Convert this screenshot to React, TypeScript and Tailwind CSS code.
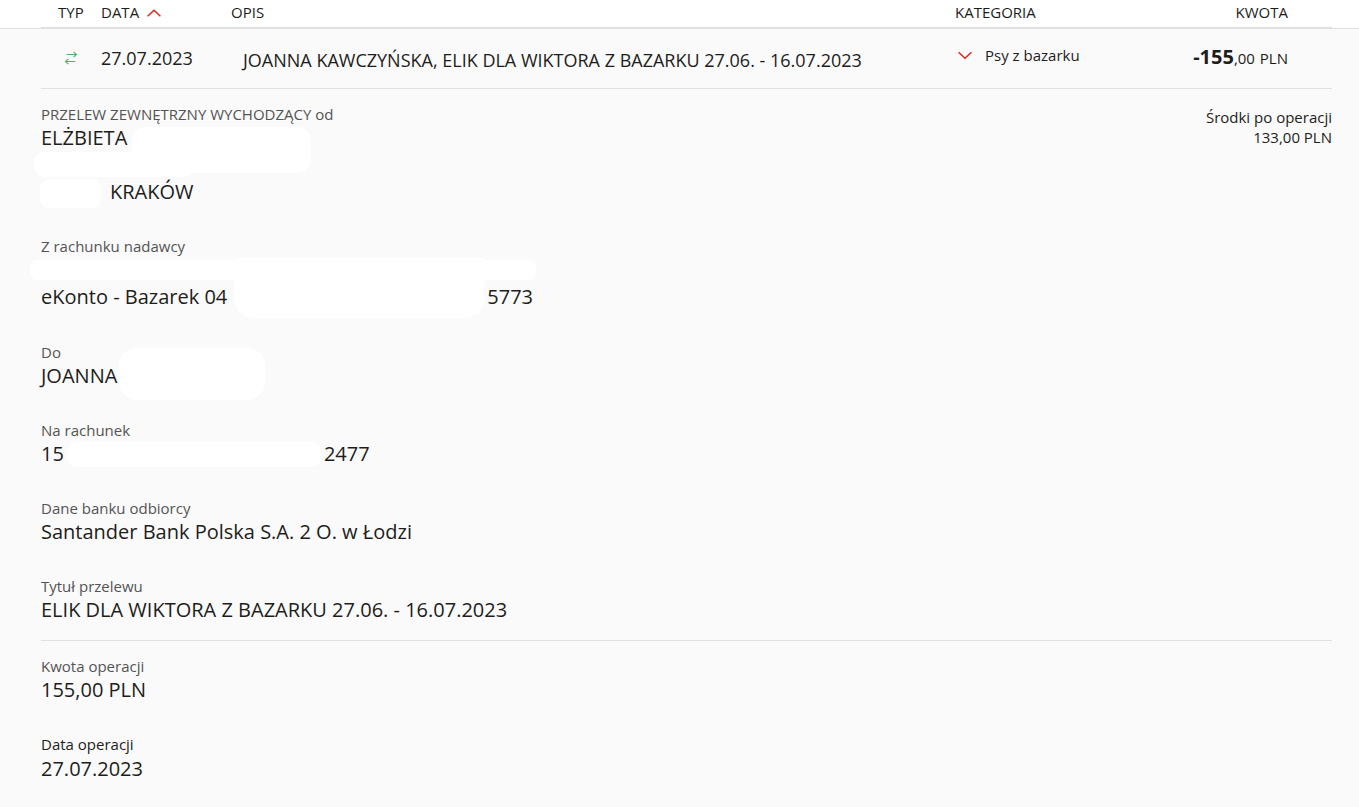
import type { ReactNode } from "react";

const columns = "grid grid-cols-[60px_130px_1fr_200px_177px]";

function Chevron({ up = false }: { up?: boolean }) {
  return (
    <svg width="14" height="8" viewBox="0 0 14 8" fill="none" stroke="#e1251b" strokeWidth="1.5" aria-hidden="true">
      <path d={up ? "M0.6 7.2 L7 1.2 L13.4 7.2" : "M0.6 0.3 L7 6.3 L13.4 0.3"} />
    </svg>
  );
}

function TransferIcon() {
  return (
    <svg width="12" height="14" viewBox="0 0 12 14" fill="none" stroke="#4bb768" strokeWidth="1.1" role="img" aria-label="Przelew">
      <path d="M1.5 3.5H11.3M8.6 0.8L11.4 3.5L8.6 6.2" />
      <path d="M10.3 10.5H0.7M3.4 7.8L0.6 10.5L3.4 13.2" />
    </svg>
  );
}

function Field({ label, dark = false, children }: { label: string; dark?: boolean; children: ReactNode }) {
  return (
    <div>
      <dt className={dark ? "text-[15px] leading-[21px] text-[#1d1d1b]" : "text-[15px] leading-[20px] text-[#545454]"}>{label}</dt>
      <dd className="relative text-[20px] leading-[27px]">{children}</dd>
    </div>
  );
}

export default function App() {
  return (
    <main className="min-h-screen bg-[#fafafa] font-['Open_Sans',sans-serif] text-[#1d1d1b]">
      <table className="block w-full text-left">
        <thead className="block border-b border-[#e0e0e0] bg-white pl-[41px] pr-[27px] text-[15px] leading-[25px]">
          <tr className={`${columns} border-b border-[#e0e0e0] pb-[2px]`}>
            <th className="pl-[17px] font-normal">TYP</th>
            <th className="font-normal">
              <button type="button" className="flex items-center gap-2">
                DATA <Chevron up />
              </button>
            </th>
            <th className="font-normal">OPIS</th>
            <th className="font-normal">KATEGORIA</th>
            <th className="pr-11 text-right font-normal">KWOTA</th>
          </tr>
        </thead>
        <tbody className="block pl-[41px] pr-[27px]">
          <tr className={`${columns} h-[60px] items-center border-b border-[#e0e0e0]`}>
            <td className="pb-[2px] pl-6"><TransferIcon /></td>
            <td className="text-[18px]">27.07.2023</td>
            <td className="pl-3 pt-1 text-[18px]">JOANNA KAWCZYŃSKA, ELIK DLA WIKTORA Z BAZARKU 27.06. - 16.07.2023</td>
            <td className="pb-[6px] pl-[3px]">
              <button type="button" className="flex items-center gap-[13px] text-[15px]">
                <Chevron /> Psy z bazarku
              </button>
            </td>
            <td className="pb-1 pr-11 text-right text-[15px]">
              <strong className="text-[20px] font-bold">-155</strong>,00 <span className="pl-px">PLN</span>
            </td>
          </tr>
        </tbody>
      </table>

      <section className="pl-[41px] pr-[27px]">
        <div className="flex justify-between pb-[17px] pt-[15px]">
          <dl className="flex flex-col gap-[31px]">
            <Field label="PRZELEW ZEWNĘTRZNY WYCHODZĄCY od">
              <span className="absolute left-[91px] top-[3px] h-[46px] w-[179px] rounded-[14px] bg-white" />
              <span className="absolute -left-[7px] top-[28px] h-[25px] w-[160px] rounded-[10px] bg-white" />
              <span className="absolute -left-px top-[55px] h-[29px] w-[61px] rounded-[9px] bg-white" />
              <span className="relative block">ELŻBIETA</span>
              <span className="relative mt-[27px] block pl-[69px]">KRAKÓW</span>
            </Field>
            <Field label="Z rachunku nadawcy">
              <span className="absolute -left-[11px] top-[4px] h-[20px] w-[506px] rounded-[7px] bg-white" />
              <span className="absolute left-[193px] top-[2px] h-[60px] w-[251px] rounded-b-[20px] bg-white" />
              <span className="relative flex min-h-[55px] gap-[260px] pt-[27px]">
                <span>eKonto - Bazarek 04</span>
                <span>5773</span>
              </span>
            </Field>
            <Field label="Do">
              <span className="absolute left-[78px] -top-[14px] h-[52px] w-[146px] rounded-[18px] bg-white" />
              <span className="relative">JOANNA</span>
            </Field>
            <Field label="Na rachunek">
              <span className="absolute left-[26px] top-[2px] h-[25px] w-[254px] rounded-[10px] bg-white" />
              <span className="relative flex gap-[260px]">
                <span>15</span>
                <span>2477</span>
              </span>
            </Field>
            <Field label="Dane banku odbiorcy">Santander Bank Polska S.A. 2 O. w Łodzi</Field>
            <Field label="Tytuł przelewu">ELIK DLA WIKTORA Z BAZARKU 27.06. - 16.07.2023</Field>
          </dl>
          <p className="pt-[3px] text-right text-[15px] leading-[20px]">
            Środki po operacji
            <br />
            133,00 PLN
          </p>
        </div>
        <dl className="flex flex-col gap-[31px] border-t border-[#e0e0e0] pt-[15px]">
          <Field label="Kwota operacji">155,00 PLN</Field>
          <Field label="Data operacji" dark>27.07.2023</Field>
        </dl>
      </section>
    </main>
  );
}
